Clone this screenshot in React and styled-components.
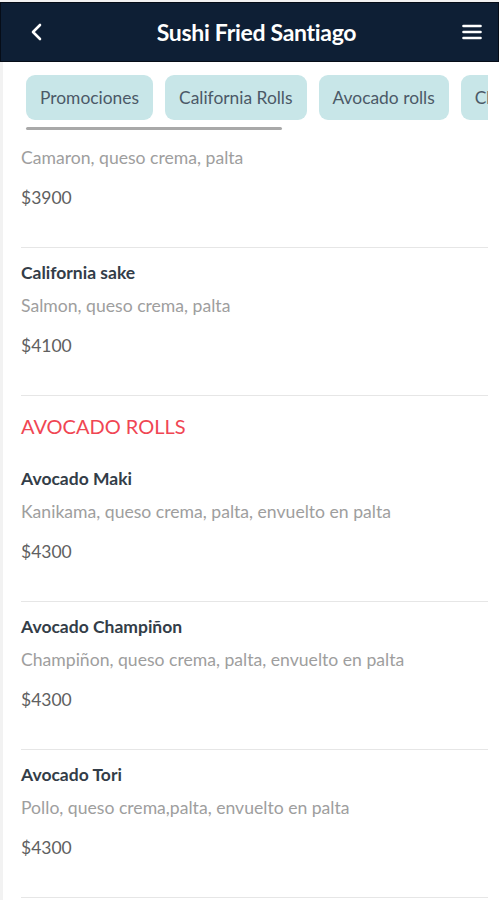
import React from "react";
import styled, { createGlobalStyle } from "styled-components";

const GlobalStyle = createGlobalStyle`
  html, body {
    margin: 0;
    padding: 0;
    background: #ffffff;
  }
  body {
    font-family: Lato, "Open Sans", "Liberation Sans", sans-serif;
    overflow: hidden;
  }
`;

const Page = styled.div`
  width: 499px;
  height: 900px;
  padding-top: 2px;
  box-sizing: border-box;
  background: #f2f2f2;
  display: flex;
  flex-direction: column;
`;

const Header = styled.header`
  height: 60px;
  flex-shrink: 0;
  background: #0e1f35;
  border: 1px solid #060d18;
  box-sizing: border-box;
  display: flex;
  align-items: center;
  justify-content: space-between;
  padding: 0 14px 0 24px;
`;

const Title = styled.h1`
  margin: 0 0 0 4px;
  color: #ffffff;
  font-size: 23px;
  font-weight: 700;
  letter-spacing: -0.3px;
`;

const IconButton = styled.span`
  width: 24px;
  height: 24px;
  display: flex;
  align-items: center;
  justify-content: center;
`;

const Body = styled.div`
  flex: 1;
  margin-left: 3px;
  background: #ffffff;
  display: flex;
  flex-direction: column;
  overflow: hidden;
`;

const TabBar = styled.div`
  padding: 13px 11px 0 23px;
  height: 78px;
  box-sizing: border-box;
  flex-shrink: 0;
`;

const Tabs = styled.div`
  display: flex;
  gap: 12px;
  overflow: hidden;
`;

const Tab = styled.div`
  flex-shrink: 0;
  height: 45px;
  padding: 0 14px;
  border-radius: 9px;
  background: #c8e6e8;
  color: #4b5967;
  font-size: 17.4px;
  display: flex;
  align-items: center;
`;

const ScrollThumb = styled.div`
  margin-top: 7px;
  width: 256px;
  height: 3px;
  border-radius: 2px;
  background: #a9a9a9;
`;

const List = styled.div`
  padding: 9px 11px 0 18px;
`;

const Item = styled.div`
  padding: ${(p) => (p.$partial ? "0" : "16px")} 0 40px;
  border-bottom: 1px solid #e6e6e6;
`;

const ItemName = styled.div`
  font-size: 17.5px;
  line-height: 18px;
  font-weight: 700;
  color: #333d48;
`;

const ItemDesc = styled.div`
  margin-top: ${(p) => (p.$first ? "0" : "15px")};
  font-size: 17.6px;
  line-height: 18px;
  color: #9e9e9e;
`;

const ItemPrice = styled.div`
  margin-top: 22px;
  font-size: 17.5px;
  line-height: 18px;
  color: #606060;
`;

const SectionTitle = styled.h2`
  margin: 19px 0 17px;
  font-size: 20px;
  line-height: 22px;
  font-weight: 400;
  color: #f04653;
`;

const BackIcon = () => (
  <svg width="14" height="18" viewBox="0 0 14 18">
    <path d="M10 2 L3 9 L10 16" fill="none" stroke="#fff" strokeWidth="2.6" strokeLinecap="round" strokeLinejoin="round" />
  </svg>
);

const MenuIcon = () => (
  <svg width="20" height="18" viewBox="0 0 20 18">
    <g stroke="#fff" strokeWidth="2.6" strokeLinecap="round">
      <line x1="1.5" y1="3" x2="18.5" y2="3" />
      <line x1="1.5" y1="9" x2="18.5" y2="9" />
      <line x1="1.5" y1="15" x2="18.5" y2="15" />
    </g>
  </svg>
);

const tabs = ["Promociones", "California Rolls", "Avocado rolls", "Champiñon rolls"];

const renderItem = (item) => (
  <Item key={item.name}>
    <ItemName>{item.name}</ItemName>
    <ItemDesc>{item.desc}</ItemDesc>
    <ItemPrice>{item.price}</ItemPrice>
  </Item>
);

const californiaRest = [{ name: "California sake", desc: "Salmon, queso crema, palta", price: "$4100" }];

const avocado = [
  { name: "Avocado Maki", desc: "Kanikama, queso crema, palta, envuelto en palta", price: "$4300" },
  { name: "Avocado Champiñon", desc: "Champiñon, queso crema, palta, envuelto en palta", price: "$4300" },
  { name: "Avocado Tori", desc: "Pollo, queso crema,palta, envuelto en palta", price: "$4300" },
];

export default function App() {
  return (
    <>
      <GlobalStyle />
      <Page>
        <Header>
          <IconButton>
            <BackIcon />
          </IconButton>
          <Title>Sushi Fried Santiago</Title>
          <IconButton>
            <MenuIcon />
          </IconButton>
        </Header>
        <Body>
          <TabBar>
            <Tabs>
              {tabs.map((t) => (
                <Tab key={t}>{t}</Tab>
              ))}
            </Tabs>
            <ScrollThumb />
          </TabBar>
          <List>
            <Item $partial>
              <ItemDesc $first>Camaron, queso crema, palta</ItemDesc>
              <ItemPrice>$3900</ItemPrice>
            </Item>
            {californiaRest.map(renderItem)}
            <SectionTitle>AVOCADO ROLLS</SectionTitle>
            {avocado.map(renderItem)}
          </List>
        </Body>
      </Page>
    </>
  );
}
